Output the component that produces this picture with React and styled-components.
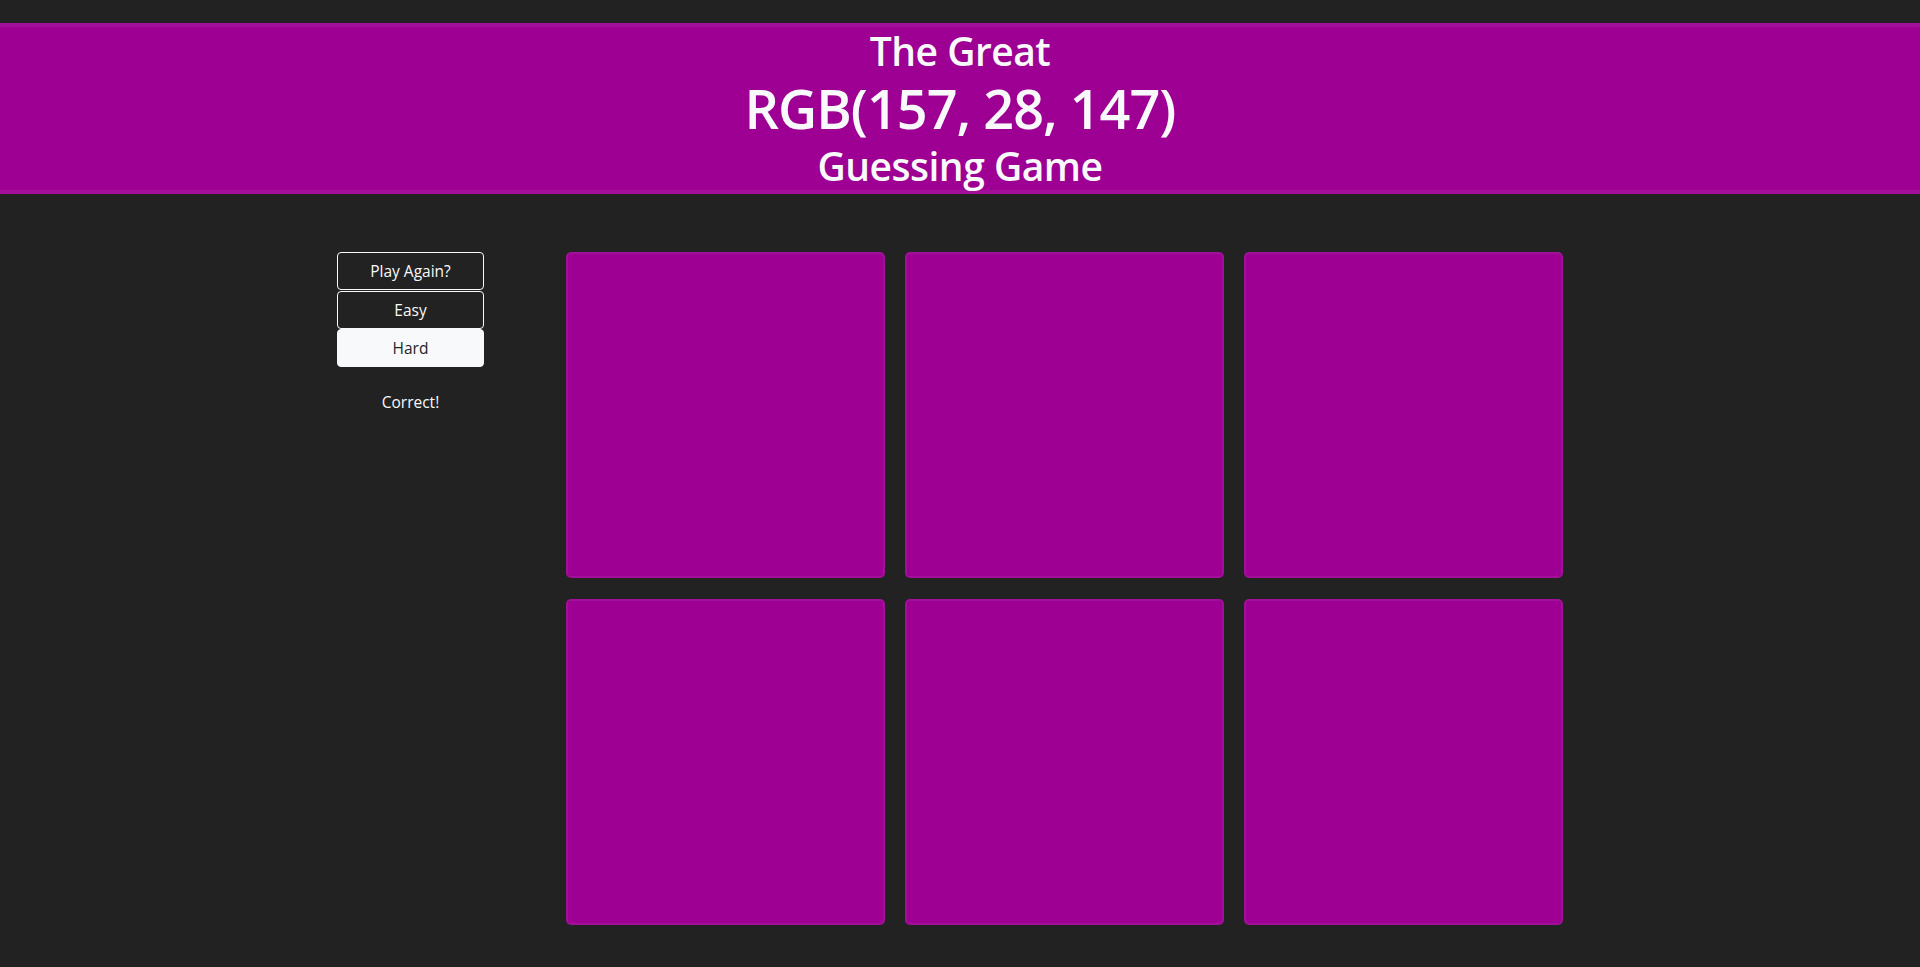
import React from "react";
import styled, { createGlobalStyle } from "styled-components";

const GlobalStyle = createGlobalStyle`
  html, body {
    margin: 0;
    padding: 0;
    background: #222222;
    color: #f8f9fa;
    font-family: "Segoe UI", "Open Sans", "Noto Sans", sans-serif;
  }
  * { box-sizing: border-box; }
`;

const Page = styled.div`
  min-height: 967px;
  padding-top: 23px;
  background: #222222;
`;

const Header = styled.header`
  background: #9d0093;
  border-top: 4px solid #a2109a;
  border-bottom: 4px solid #a2109a;
  text-align: center;
  color: #f8f9fa;
`;

const HeadLine = styled.div`
  font-size: ${(p) => (p.$big ? "54px" : "39px")};
  line-height: ${(p) => (p.$big ? "67.2px" : "48px")};
  letter-spacing: ${(p) => (p.$big ? "-1px" : "-0.5px")};
  font-weight: 600;
`;

const Main = styled.main`
  display: flex;
  justify-content: center;
  align-items: flex-start;
  gap: 82px;
  padding: 58px 20px 0 0;
`;

const Side = styled.aside`
  width: 147px;
  display: flex;
  flex-direction: column;
  align-items: stretch;
`;

const Button = styled.button`
  height: 38px;
  margin-bottom: ${(p) => (p.$spaced ? "1px" : "0")};
  font-family: inherit;
  font-size: 15.5px;
  line-height: 1.5;
  border-radius: 4px;
  border: 1px solid #f8f9fa;
  background: ${(p) => (p.$active ? "#f8f9fa" : "transparent")};
  color: ${(p) => (p.$active ? "#212529" : "#f8f9fa")};
  cursor: pointer;
`;

const Message = styled.p`
  margin: 24px 0 0;
  text-align: center;
  font-size: 15.5px;
  line-height: 1.5;
`;

const Grid = styled.section`
  width: 997px;
  display: grid;
  grid-template-columns: repeat(3, 1fr);
  grid-auto-rows: 326px;
  column-gap: 20.5px;
  row-gap: 21px;
`;

const Tile = styled.div`
  background: ${(p) => p.$color};
  border: 2px solid rgba(255, 255, 255, 0.06);
  border-radius: 5px;
  cursor: pointer;
`;

const color = "#9d0093";

export default function App() {
  const tiles = Array.from({ length: 6 });
  return (
    <>
      <GlobalStyle />
      <Page>
        <Header>
          <HeadLine>The Great</HeadLine>
          <HeadLine $big>RGB(157, 28, 147)</HeadLine>
          <HeadLine>Guessing Game</HeadLine>
        </Header>
        <Main>
          <Side>
            <Button $spaced>Play Again?</Button>
            <Button>Easy</Button>
            <Button $active>Hard</Button>
            <Message>Correct!</Message>
          </Side>
          <Grid>
            {tiles.map((_, i) => (
              <Tile key={i} $color={color} />
            ))}
          </Grid>
        </Main>
      </Page>
    </>
  );
}
